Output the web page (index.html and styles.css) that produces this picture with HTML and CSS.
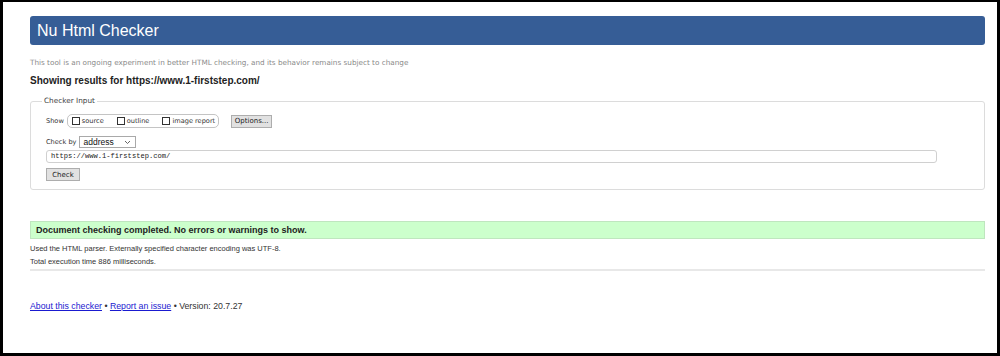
FILE: index.html
```html
<!DOCTYPE html>
<html lang="en">

<head>
    <meta charset="UTF-8">
    <meta name="viewport" content="width=device-width, initial-scale=1.0">
    <title>Nu Html Checker</title>
    <link rel="stylesheet" href="styles.css">
</head>

<body>
    <div class="frame">
        <div class="page">
            <h1 class="title">Nu Html Checker</h1>
            <p class="tagline">This tool is an ongoing experiment in better HTML checking, and its behavior remains subject to change</p>
            <h2 class="results-for">Showing results for https://www.1-firststep.com/</h2>

            <fieldset class="checker-input">
                <legend>Checker Input</legend>
                <div class="show-row">
                    <span class="label">Show</span>
                    <span class="show-group">
                        <span class="option"><span class="box"></span>source</span>
                        <span class="option"><span class="box"></span>outline</span>
                        <span class="option"><span class="box"></span>image report</span>
                    </span>
                    <span class="btn options-btn">Options...</span>
                </div>
                <div class="check-by">
                    <span class="label">Check by</span>
                    <span class="select">address
                        <svg class="chevron" width="7" height="5" viewBox="0 0 7 5">
                            <path d="M1 1 L3.5 3.5 L6 1" fill="none" stroke="#555" stroke-width="0.9" />
                        </svg>
                    </span>
                </div>
                <div class="url-input">https://www.1-firststep.com/</div>
                <span class="btn check-btn">Check</span>
            </fieldset>

            <p class="success">Document checking completed. No errors or warnings to show.</p>
            <p class="details">Used the HTML parser. Externally specified character encoding was UTF-8.</p>
            <p class="details">Total execution time 886 milliseconds.</p>
            <hr class="rule">

            <p class="footer"><a href="#">About this checker</a> &bull; <a href="#">Report an issue</a> &bull; Version: 20.7.27</p>
        </div>
    </div>
</body>

</html>
```

FILE: styles.css
```css
html,
body {
    margin: 0;
    padding: 0;
    background-color: #000;
}

.frame {
    width: 1000px;
    height: 356px;
    box-sizing: border-box;
    border-style: solid;
    border-color: #000;
    border-width: 2px 3px 3px 3px;
    background-color: #fff;
    overflow: hidden;
}

.page {
    padding: 0 12px 0 27px;
    font-family: "Liberation Sans", Arial, sans-serif;
    color: #222;
}

.title {
    margin: 14px 0 0;
    height: 29px;
    line-height: 29px;
    padding-left: 7px;
    background-color: #365d96;
    color: #fff;
    font-size: 16px;
    font-weight: normal;
    border-radius: 3px;
}

.tagline {
    margin: 13px 0 0;
    font-family: "DejaVu Sans", Verdana, sans-serif;
    font-size: 7.25px;
    line-height: 10px;
    color: #8a8a8a;
}

.results-for {
    margin: 7px 0 0;
    font-size: 10px;
    line-height: 12px;
    font-weight: bold;
    color: #222;
}

.checker-input {
    margin: 9px 0 0;
    padding: 8px 15px 8px 15px;
    border: 1px solid #dcdcdc;
    border-radius: 3px;
    font-family: "DejaVu Sans", Verdana, sans-serif;
    font-size: 7px;
    color: #333;
}

.checker-input legend {
    padding: 0 2px;
    margin-left: -4px;
    line-height: 10px;
    font-size: 7.3px;
    color: #444;
}

.label {
    font-size: 6.6px;
}

.show-row {
    display: flex;
    align-items: center;
    height: 14px;
}

.show-group {
    display: flex;
    align-items: center;
    height: 12px;
    margin-left: 3px;
    padding: 0 3px 0 4px;
    border: 1px solid #c4c4c4;
    border-radius: 5px;
    font-size: 6.6px;
}

.option {
    display: flex;
    align-items: center;
    margin-right: 13px;
}

.option:last-child {
    margin-right: 0;
}

.box {
    width: 6px;
    height: 6px;
    margin-right: 2px;
    border: 1px solid #333;
    background-color: #fff;
}

.btn {
    display: inline-flex;
    align-items: center;
    box-sizing: border-box;
    height: 13px;
    padding: 0 4px;
    background-color: #e1e1e1;
    border: 1px solid #adadad;
    color: #222;
}

.options-btn {
    margin-left: 12px;
    width: 41px;
    justify-content: center;
}

.check-by {
    display: flex;
    align-items: center;
    margin-top: 8px;
    height: 12px;
}

.select {
    display: flex;
    align-items: center;
    justify-content: space-between;
    box-sizing: border-box;
    width: 57px;
    height: 12px;
    margin-left: 3px;
    padding: 0 4px 0 3px;
    border: 1px solid #a9a9a9;
    font-family: "Liberation Sans", Arial, sans-serif;
    font-size: 8.5px;
    color: #111;
}

.url-input {
    box-sizing: border-box;
    width: 891px;
    height: 13px;
    margin-top: 2px;
    padding-left: 4px;
    line-height: 11px;
    border: 1px solid #d0d0d0;
    border-radius: 3px;
    font-family: "Liberation Mono", "DejaVu Sans Mono", monospace;
    font-size: 7.1px;
    color: #222;
}

.check-btn {
    margin-top: 5px;
    width: 34px;
    justify-content: center;
}

.success {
    margin: 31px 0 0;
    height: 18px;
    box-sizing: border-box;
    padding-left: 5px;
    line-height: 16px;
    background-color: #ccffcc;
    border: 1px solid #bfe6bf;
    font-size: 9px;
    font-weight: bold;
    color: #222;
}

.details {
    margin: 5px 0 0;
    font-size: 7.5px;
    line-height: 10px;
    color: #333;
}

.details + .details {
    margin-top: 3px;
}

.rule {
    margin: 2px 0 0;
    height: 0;
    border: none;
    border-top: 2px solid #e8e8e8;
}

.footer {
    margin: 29px 0 0;
    font-size: 8.75px;
    line-height: 12px;
    color: #333;
}

.footer a {
    color: #1a1ad0;
}
```
